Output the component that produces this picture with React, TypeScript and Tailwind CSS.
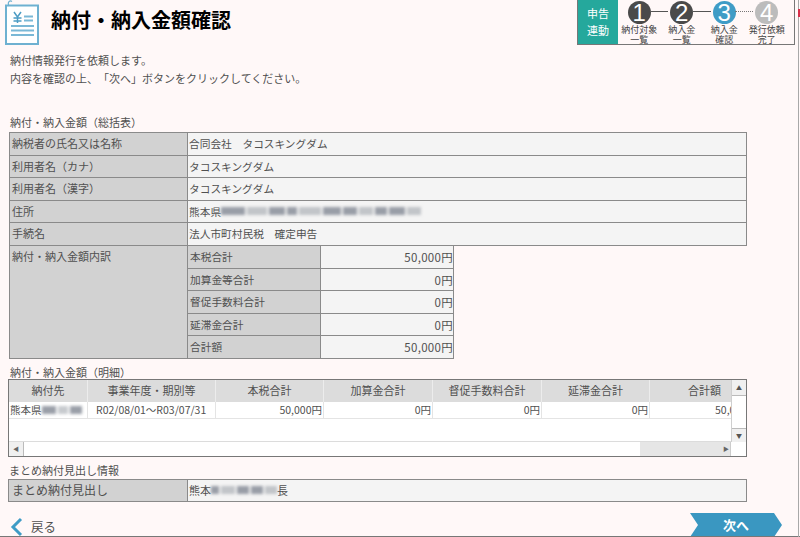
const font = 'font-["Noto_Sans_CJK_JP","Noto_Sans",sans-serif]'

function Smudge({ widths }: { widths: number[] }) {
  return (
    <span className="inline-flex items-center gap-[2px] blur-[1.5px] align-middle">
      {widths.map((w, i) => (
        <span key={i} className="h-[8px] bg-[#8f959e]" style={{ width: w, opacity: i % 3 === 1 ? 0.5 : 0.9 }} />
      ))}
    </span>
  )
}

function Row({ label, children }: { label: string; children: React.ReactNode }) {
  return (
    <div className="flex h-[22.6px] border-b border-l border-r border-[#8a8a8a]">
      <div className="w-[178px] shrink-0 bg-[#d2d2d2] border-r border-[#8a8a8a] pl-[2px] leading-[20px]">{label}</div>
      <div className="flex-1 bg-[#f4f4f4] pl-px text-[10.7px] leading-[21px]">{children}</div>
    </div>
  )
}

function SubRow({ label, value }: { label: string; value: string }) {
  return (
    <div className="flex h-[22.6px] border-b border-l border-r border-[#8a8a8a]">
      <div className="w-[133px] shrink-0 bg-[#d2d2d2] border-r border-[#8a8a8a] pl-[2px] text-[10.7px] leading-[21px]">{label}</div>
      <div className="flex-1 bg-[#f4f4f4] text-right text-[11.5px] leading-[22px] tracking-[0.3px]">{value}</div>
    </div>
  )
}

const columns = [
  { name: '納付先', w: 'w-[79px]', align: 'text-center' },
  { name: '事業年度・期別等', w: 'w-[128px]', align: 'text-center' },
  { name: '本税合計', w: 'w-[108px]', align: 'text-center' },
  { name: '加算金合計', w: 'w-[109px]', align: 'text-center' },
  { name: '督促手数料合計', w: 'w-[109px]', align: 'text-center' },
  { name: '延滞金合計', w: 'w-[108px]', align: 'text-center' },
  { name: '合計額', w: 'w-[83px]', align: 'text-right pr-[11px]' },
]

function Step({ n, color, lines }: { n: number; color: string; lines: string[] }) {
  return (
    <div className="flex w-[42.5px] shrink-0 flex-col items-center">
      <div className={`flex h-[23px] w-[23px] items-center justify-center rounded-full text-[24px] leading-none text-white ${color}`}>
        <span className='font-["Liberation_Sans",sans-serif]'>{n}</span>
      </div>
      <div className="mt-[1px] whitespace-nowrap text-center text-[9px] leading-[9.5px] text-[#444]">
        {lines.map(l => (
          <div key={l}>{l}</div>
        ))}
      </div>
    </div>
  )
}

export default function App() {
  return (
    <div className={`${font} relative h-[537px] w-[800px] overflow-hidden bg-[#fff8f8] text-[11px] text-[#505050] [text-spacing-trim:space-all]`}>
      {/* header */}
      <div className="flex h-[46px] items-start justify-between">
        <div className="flex items-start pl-[5px]">
          <svg width="35" height="45" viewBox="0 0 35 45" fill="none">
            <rect x="1" y="5.5" width="32" height="38.5" fill="#fff" stroke="#6eb1d1" strokeWidth="2" />
            <path d="M4 6C2 2 5 0 7 1.500" stroke="#6eb1d1" strokeWidth="1.2" />
            <path d="M9 12l3.500 5 3.500-5M12.500 17v6M8.500 18h8M8.500 21h8" stroke="#4c9cc4" strokeWidth="1.500" />
            <path d="M19 16.500h9M19 20.500h9M6 26h23M6 30.500h23M6 35h23" stroke="#7ab8d6" strokeWidth="1.800" />
          </svg>
          <h1 className="ml-[11px] mt-[7px] text-[20px] font-bold leading-[26px] text-black">納付・納入金額確認</h1>
        </div>
        <div className="mr-[5px] flex h-[45px] w-[218px] border-b border-l border-r border-[#777] bg-[#fff8f8]">
          <div className="flex w-[40px] shrink-0 flex-col items-center justify-center bg-[#25a89c] text-[11px] leading-[17px] text-white">
            <div>申告</div>
            <div>連動</div>
          </div>
          <div className="relative flex flex-1 items-start pt-[1px]">
            <div className="absolute left-[33px] top-[11px] h-px w-[17px] bg-[#555]" />
            <div className="absolute left-[75px] top-[11px] h-px w-[18px] bg-[#555]" />
            <div className="absolute left-[117px] top-[11px] w-[18px] border-t border-dotted border-[#777]" />
            <Step n={1} color="bg-[#4a4a4a]" lines={['納付対象', '一覧']} />
            <Step n={2} color="bg-[#4a4a4a]" lines={['納入金', '一覧']} />
            <Step n={3} color="bg-[#3f9cc6]" lines={['納入金', '確認']} />
            <Step n={4} color="bg-[#bcbcbc]" lines={['発行依頼', '完了']} />
          </div>
        </div>
      </div>

      {/* intro */}
      <div className="pl-[10px] pt-[5px] leading-[18px]">
        <p>納付情報発行を依頼します。</p>
        <p>内容を確認の上、「次へ」ボタンをクリックしてください。</p>
      </div>

      <div className="pl-[10px] pt-[28px] leading-[14px]">納付・納入金額（総括表）</div>

      {/* summary */}
      <div className="ml-[9px] mt-[3px] w-[738px] border-t border-[#8a8a8a]">
        <Row label="納税者の氏名又は名称">合同会社　タコスキングダム</Row>
        <Row label="利用者名（カナ）">タコスキングダム</Row>
        <Row label="利用者名（漢字）">タコスキングダム</Row>
        <Row label="住所">
          <span className="inline-flex items-center">
            熊本県
            <Smudge widths={[24, 20, 16, 10, 22, 18, 14, 14, 12, 16, 14]} />
          </span>
        </Row>
        <Row label="手続名">法人市町村民税　確定申告</Row>
        <div className="flex border-l border-[#8a8a8a]">
          <div className="w-[178px] shrink-0 border-b border-r border-[#8a8a8a] bg-[#d2d2d2] pl-[2px] leading-[20px]">納付・納入金額内訳</div>
          <div className="w-[267px] -ml-px">
            <SubRow label="本税合計" value="50,000円" />
            <SubRow label="加算金等合計" value="0円" />
            <SubRow label="督促手数料合計" value="0円" />
            <SubRow label="延滞金合計" value="0円" />
            <SubRow label="合計額" value="50,000円" />
          </div>
        </div>
      </div>

      <div className="pl-[10px] pt-[6px] leading-[14px]">納付・納入金額（明細）</div>

      {/* detail grid */}
      <div className="relative ml-[8px] h-[78px] w-[739px] overflow-hidden border border-[#777] bg-white">
        <div className="flex h-[22px] w-[724px] overflow-hidden bg-[#dcdcdc] leading-[21px]">
          {columns.map(c => (
            <div key={c.name} className={`${c.w} ${c.align} shrink-0 whitespace-nowrap border-r border-[#ececec]`}>
              {c.name}
            </div>
          ))}
        </div>
        <div className="flex h-[17px] w-[724px] overflow-hidden border-b border-[#e4e4e4] text-[10.5px] leading-[16px]">
          <div className="flex w-[79px] shrink-0 items-center whitespace-nowrap border-r border-[#e4e4e4] pl-px">
            熊本県
            <Smudge widths={[14, 10, 12]} />
          </div>
          <div className="w-[128px] shrink-0 whitespace-nowrap border-r border-[#e4e4e4] pl-[8px]">R02/08/01～R03/07/31</div>
          <div className="w-[108px] shrink-0 border-r border-[#e4e4e4] pr-px text-right">50,000円</div>
          <div className="w-[109px] shrink-0 border-r border-[#e4e4e4] pr-px text-right">0円</div>
          <div className="w-[109px] shrink-0 border-r border-[#e4e4e4] pr-px text-right">0円</div>
          <div className="w-[108px] shrink-0 border-r border-[#e4e4e4] pr-px text-right">0円</div>
          <div className="w-[83px] shrink-0 overflow-hidden whitespace-nowrap pl-[65px]">50,000円</div>
        </div>

        {/* scrollbars */}
        <div className="absolute right-0 top-0 flex h-[62px] w-[15px] flex-col border-l border-[#cfcfcf] bg-white">
          <div className="flex h-[16px] items-center justify-center border-b border-[#bbb] bg-[#f0f0f0] text-[6px] text-[#555]">▲</div>
          <div className="flex-1" />
          <div className="flex h-[14px] items-center justify-center border-t border-[#bbb] bg-[#f0f0f0] text-[6px] text-[#555]">▼</div>
        </div>
        <div className="absolute bottom-0 left-0 right-[15px] flex h-[15px] border-t border-[#dcdcdc] bg-[#e6e6e6]">
          <div className="flex w-[15px] items-center justify-center border-r border-[#bbb] bg-[#f0f0f0] text-[6px] text-[#666]">◀</div>
          <div className="w-[616px] bg-white" />
          <div className="flex-1" />
          <div className="flex w-[9px] items-center justify-center border-r border-[#ccc] text-[6px] text-[#666]">▶</div>
        </div>
      </div>

      <div className="pl-[9px] pt-[6px] leading-[14px]">まとめ納付見出し情報</div>

      <div className="ml-[8px] mt-[2px] flex h-[23px] w-[739px] border border-[#8a8a8a]">
        <div className="w-[179px] shrink-0 border-r border-[#8a8a8a] bg-[#d2d2d2] pl-[3px] text-[12px] leading-[19px]">まとめ納付見出し</div>
        <div className="flex flex-1 items-center bg-[#f4f4f4] pl-[1px]">
          熊本
          <Smudge widths={[8, 14, 12, 12, 12]} />長
        </div>
      </div>

      {/* footer */}
      <div className="absolute bottom-0 left-0 right-0 flex h-[26px] items-end justify-between">
        <div className="flex items-center pl-[10px]">
          <svg width="13" height="20" viewBox="0 0 13 20" fill="none">
            <path d="M11 2L3 10l8 8" stroke="#3f9cc6" strokeWidth="3" />
          </svg>
          <span className="ml-[8px] text-[12.5px]">戻る</span>
        </div>
        <div className="mr-[18px] flex h-[24px] w-[92px] items-center justify-center bg-[#3a97c1] text-[13px] font-bold text-white [clip-path:polygon(0_0,84px_0,92px_50%,84px_100%,0_100%,8px_50%)]">
          次へ
        </div>
      </div>
      <div className="absolute bottom-0 left-0 right-0 h-px bg-[#777]" />

      {/* edge of the window behind */}
      <div className="absolute bottom-0 right-[1px] top-0 w-px bg-[#a8a8a8]" />
      <div className="absolute right-0 top-[9px] h-[8px] w-[2px] bg-[#d8304a]" />
    </div>
  )
}
